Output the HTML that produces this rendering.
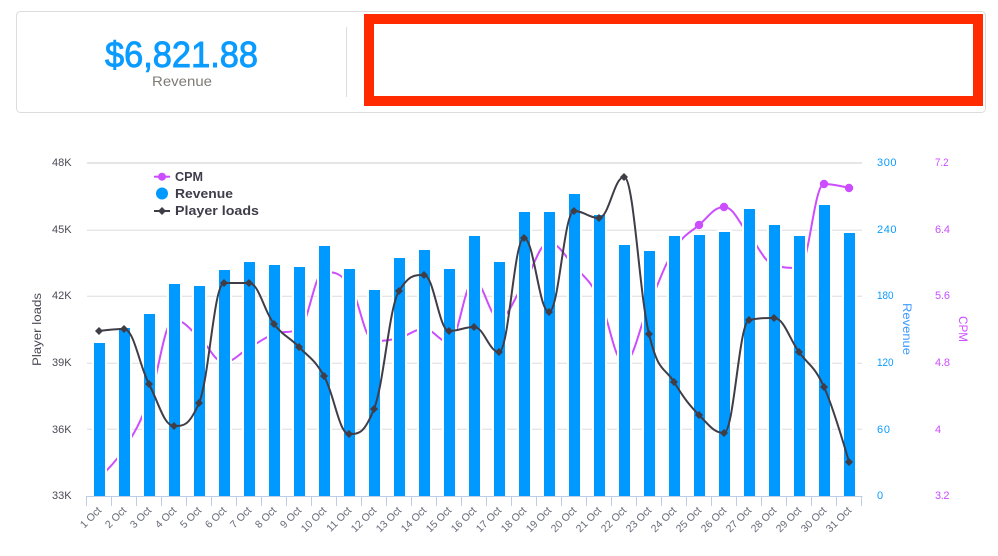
<!DOCTYPE html>
<html><head><meta charset="utf-8"><style>
html,body{margin:0;padding:0;background:#fff}
svg{display:block}
text{font-family:"Liberation Sans",sans-serif}
.l{font-size:11px;fill:#4a4a55}
.b{font-size:11px;fill:#0a9bff}
.p{font-size:11px;fill:#cc4dff}
.x{font-size:10.5px;fill:#666a78;text-anchor:end}
.g{font-size:13px;font-weight:bold;fill:#3f3d4a}
</style></head><body>
<svg width="998" height="556" viewBox="0 0 998 556" xmlns="http://www.w3.org/2000/svg">
<rect x="16.5" y="11.5" width="969" height="101" rx="4" fill="#fff" stroke="#dcdcdc"/>
<path d="M346.5 27V97" stroke="#dcdcdc" fill="none"/>
<text x="105" y="67" font-size="36" fill="#0a9bff" stroke="#0a9bff" stroke-width=".9" textLength="153" lengthAdjust="spacingAndGlyphs">$6,821.88</text>
<text x="152" y="86" font-size="14" fill="#7f7a75" textLength="60" lengthAdjust="spacingAndGlyphs">Revenue</text>
<path fill="#ff2a00" fill-rule="evenodd" d="M364 14H983V106H364ZM374 24V96H973V24Z"/>

<path d="M87 163H862" stroke="#e6e6e6" stroke-width="2" fill="none"/>
<path d="M87 230.3H862M87 296.3H862M87 363.3H862M87 429.3H862" stroke="#e6e6e6" stroke-width="1.3" fill="none"/>

<path fill="none" stroke="#cc4dff" stroke-width="2" d="M99 478C99 478 114 464.6 124 449C134 433.4 139 425.8 149 400C159 374.2 164 320 174 320C184 320 189 328.6 199 337C209 345.4 214 362 224 362C234 362 239 353.6 249 348C259 342.4 264 337.8 274 334C284 330.2 289 334 299 329C309 324 314 272 324 272C334 272 339 272 349 284C359 296 364 341 374 341C384 341 389 340.4 399 338C409 335.6 414 329 424 329C434 329 439 342 449 342C459 342 464 281 474 281C484 281 489 318 499 318C509 318 514 298 524 283C534 268 539 243 549 243C559 243 564 255 574 266C584 277 589 278.8 599 298C609 317.2 614 362 624 362C634 362 639 327.4 649 305C659 282.6 664 266 674 250C684 234 689 233.6 699 225C709 216.4 714 207 724 207C734 207 739 223.4 749 235C759 246.6 764 262 774 265C784 268 789 268 799 268C809 268 814 184 824 184C834 184 849 188 849 188"/>
<g fill="#cc4dff"><circle cx="699" cy="225" r="4.2"/><circle cx="724" cy="207" r="4.2"/><circle cx="824" cy="184" r="4.2"/><circle cx="849" cy="188" r="4.2"/></g>

<path fill="#0099ff" stroke="#fff" stroke-width="2" d="M93 342V497h13V342zM118 327V497h13V327zM143 313V497h13V313zM168 283V497h13V283zM193 285V497h13V285zM218 269V497h13V269zM243 261V497h13V261zM268 264V497h13V264zM293 266V497h13V266zM318 245V497h13V245zM343 268V497h13V268zM368 289V497h13V289zM393 257V497h13V257zM418 249V497h13V249zM443 268V497h13V268zM468 235V497h13V235zM493 261V497h13V261zM518 211V497h13V211zM543 211V497h13V211zM568 193V497h13V193zM593 214V497h13V214zM618 244V497h13V244zM643 250V497h13V250zM668 235V497h13V235zM693 234V497h13V234zM718 231V497h13V231zM743 208V497h13V208zM768 224V497h13V224zM793 235V497h13V235zM818 204V497h13V204zM843 232V497h13V232z"/>

<path fill="none" stroke="#bccde8" stroke-width="1" d="M86.5 496.5H862.5M86.5 496V506M111.5 496V506M136.5 496V506M161.5 496V506M186.5 496V506M211.5 496V506M236.5 496V506M261.5 496V506M286.5 496V506M311.5 496V506M336.5 496V506M361.5 496V506M386.5 496V506M411.5 496V506M436.5 496V506M461.5 496V506M486.5 496V506M511.5 496V506M536.5 496V506M561.5 496V506M586.5 496V506M611.5 496V506M636.5 496V506M661.5 496V506M686.5 496V506M711.5 496V506M736.5 496V506M761.5 496V506M786.5 496V506M811.5 496V506M836.5 496V506M861.5 496V506"/>

<path fill="none" stroke="#403d47" stroke-width="2" d="M99 331C99 331 114 329 124 329C134 329 139 364.6 149 384C159 403.4 164 426 174 426C184 426 189 426 199 403C209 380 214 283 224 283C234 283 239 283 249 283C259 283 264 311.2 274 324C284 336.8 289 336.6 299 347C309 357.4 314 358.6 324 376C334 393.4 339 434 349 434C359 434 364 434 374 409C384 384 389 307 399 291C409 275 414 275 424 275C434 275 439 331 449 331C459 331 464 327 474 327C484 327 489 352 499 352C509 352 514 238 524 238C534 238 539 312 549 312C559 312 564 211 574 211C584 211 589 218 599 218C609 218 614 177 624 177C634 177 639 293 649 334C659 375 664 365.8 674 382C684 398.2 689 404.8 699 415C709 425.2 714 433 724 433C734 433 739 322 749 320C759 318 764 318 774 318C784 318 789 338.2 799 352C809 365.8 814 365 824 387C834 409 849 462 849 462"/>
<path fill="#403d47" d="M99 327l4 4-4 4-4-4zM124 325l4 4-4 4-4-4zM149 380l4 4-4 4-4-4zM174 422l4 4-4 4-4-4zM199 399l4 4-4 4-4-4zM224 279l4 4-4 4-4-4zM249 279l4 4-4 4-4-4zM274 320l4 4-4 4-4-4zM299 343l4 4-4 4-4-4zM324 372l4 4-4 4-4-4zM349 430l4 4-4 4-4-4zM374 405l4 4-4 4-4-4zM399 287l4 4-4 4-4-4zM424 271l4 4-4 4-4-4zM449 327l4 4-4 4-4-4zM474 323l4 4-4 4-4-4zM499 348l4 4-4 4-4-4zM524 234l4 4-4 4-4-4zM549 308l4 4-4 4-4-4zM574 207l4 4-4 4-4-4zM599 214l4 4-4 4-4-4zM624 173l4 4-4 4-4-4zM649 330l4 4-4 4-4-4zM674 378l4 4-4 4-4-4zM699 411l4 4-4 4-4-4zM724 429l4 4-4 4-4-4zM749 316l4 4-4 4-4-4zM774 314l4 4-4 4-4-4zM799 348l4 4-4 4-4-4zM824 383l4 4-4 4-4-4zM849 458l4 4-4 4-4-4z"/>

<text class="l" x="52" y="166">48K</text>
<text class="l" x="52" y="233">45K</text>
<text class="l" x="52" y="299">42K</text>
<text class="l" x="52" y="366">39K</text>
<text class="l" x="52" y="433">36K</text>
<text class="l" x="52" y="499">33K</text>

<text class="b" x="877" y="166" textLength="19.5">300</text>
<text class="b" x="877" y="233" textLength="19.5">240</text>
<text class="b" x="877" y="299" textLength="16.5" lengthAdjust="spacingAndGlyphs">180</text>
<text class="b" x="877" y="366" textLength="16.5" lengthAdjust="spacingAndGlyphs">120</text>
<text class="b" x="877" y="433" textLength="13">60</text>
<text class="b" x="877" y="499">0</text>

<text class="p" x="935" y="166" textLength="13.5" lengthAdjust="spacingAndGlyphs">7.2</text>
<text class="p" x="935" y="233" textLength="15">6.4</text>
<text class="p" x="935" y="299" textLength="15">5.6</text>
<text class="p" x="935" y="366" textLength="15">4.8</text>
<text class="p" x="935" y="433">4</text>
<text class="p" x="935" y="499" textLength="14.5">3.2</text>

<text transform="translate(41 366) rotate(-90)" font-size="11.5" fill="#4a4a55" textLength="73" lengthAdjust="spacingAndGlyphs">Player loads</text>
<text transform="translate(903 303) rotate(90)" font-size="12" fill="#3d9bff" textLength="52" lengthAdjust="spacingAndGlyphs">Revenue</text>
<text transform="translate(959 316) rotate(90)" font-size="12" fill="#cc4dff" textLength="26" lengthAdjust="spacingAndGlyphs">CPM</text>

<path d="M154 176.7H170" stroke="#cc4dff" stroke-width="2"/><circle cx="162" cy="176.7" r="4" fill="#cc4dff"/>
<circle cx="162" cy="193.5" r="6" fill="#0099ff"/>
<path d="M154 211H170" stroke="#403d47" stroke-width="2"/><path d="M162 207l4 4-4 4-4-4z" fill="#403d47"/>
<text class="g" x="175" y="181" textLength="28" lengthAdjust="spacingAndGlyphs">CPM</text>
<text class="g" x="175" y="198" textLength="58" lengthAdjust="spacingAndGlyphs">Revenue</text>
<text class="g" x="175" y="215" textLength="84" lengthAdjust="spacingAndGlyphs">Player loads</text>

<text class="x" transform="translate(102 511) rotate(-45)">1 Oct</text>
<text class="x" transform="translate(127 511) rotate(-45)">2 Oct</text>
<text class="x" transform="translate(152 511) rotate(-45)">3 Oct</text>
<text class="x" transform="translate(177 511) rotate(-45)">4 Oct</text>
<text class="x" transform="translate(202 511) rotate(-45)">5 Oct</text>
<text class="x" transform="translate(227 511) rotate(-45)">6 Oct</text>
<text class="x" transform="translate(252 511) rotate(-45)">7 Oct</text>
<text class="x" transform="translate(277 511) rotate(-45)">8 Oct</text>
<text class="x" transform="translate(302 511) rotate(-45)">9 Oct</text>
<text class="x" transform="translate(327 511) rotate(-45)">10 Oct</text>
<text class="x" transform="translate(352 511) rotate(-45)">11 Oct</text>
<text class="x" transform="translate(377 511) rotate(-45)">12 Oct</text>
<text class="x" transform="translate(402 511) rotate(-45)">13 Oct</text>
<text class="x" transform="translate(427 511) rotate(-45)">14 Oct</text>
<text class="x" transform="translate(452 511) rotate(-45)">15 Oct</text>
<text class="x" transform="translate(477 511) rotate(-45)">16 Oct</text>
<text class="x" transform="translate(502 511) rotate(-45)">17 Oct</text>
<text class="x" transform="translate(527 511) rotate(-45)">18 Oct</text>
<text class="x" transform="translate(552 511) rotate(-45)">19 Oct</text>
<text class="x" transform="translate(577 511) rotate(-45)">20 Oct</text>
<text class="x" transform="translate(602 511) rotate(-45)">21 Oct</text>
<text class="x" transform="translate(627 511) rotate(-45)">22 Oct</text>
<text class="x" transform="translate(652 511) rotate(-45)">23 Oct</text>
<text class="x" transform="translate(677 511) rotate(-45)">24 Oct</text>
<text class="x" transform="translate(702 511) rotate(-45)">25 Oct</text>
<text class="x" transform="translate(727 511) rotate(-45)">26 Oct</text>
<text class="x" transform="translate(752 511) rotate(-45)">27 Oct</text>
<text class="x" transform="translate(777 511) rotate(-45)">28 Oct</text>
<text class="x" transform="translate(802 511) rotate(-45)">29 Oct</text>
<text class="x" transform="translate(827 511) rotate(-45)">30 Oct</text>
<text class="x" transform="translate(852 511) rotate(-45)">31 Oct</text>
</svg>
</body></html>
